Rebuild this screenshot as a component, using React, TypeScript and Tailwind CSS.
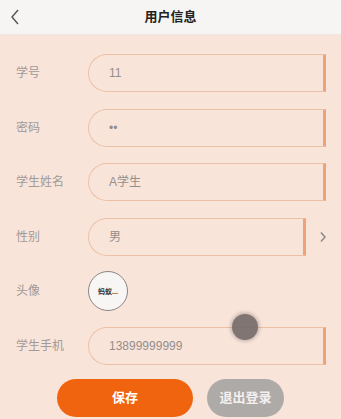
import { ReactNode } from 'react';

const font = { fontFamily: '"Liberation Sans", "Noto Sans CJK SC", sans-serif' };

interface FieldRowProps {
  label: string;
  children: ReactNode;
}

const FieldRow = ({ label, children }: FieldRowProps) => (
  <div className="flex items-center h-[38px]">
    <div className="w-[88px] pl-4 text-[12px] text-[#a09a98] shrink-0">{label}</div>
    {children}
  </div>
);

const InputBox = ({ value, width = 'w-[238px]' }: { value: string; width?: string }) => (
  <div
    className={`${width} h-[38px] flex items-center pl-5 rounded-l-full border border-[#ecc0a4] border-r-[3px] border-r-[#eea27a] text-[12px] text-[#948e8b]`}
  >
    {value}
  </div>
);

export default function App() {
  return (
    <div
      className="relative w-[341px] h-[419px] overflow-hidden bg-[#f9e4da]"
      style={font}
    >
      {/* header */}
      <div className="relative h-[35px] bg-[#f6f5f4] flex items-center justify-center border-b border-[#efe6e1]">
        <svg
          className="absolute left-[9px] top-[8px]"
          width="12"
          height="18"
          viewBox="0 0 12 18"
          fill="none"
          stroke="#555"
          strokeWidth="1.4"
        >
          <path d="M9 2 L3 9 L9 16" />
        </svg>
        <span className="text-[13px] font-bold text-[#222]">用户信息</span>
      </div>

      <div className="flex flex-col gap-[16.6px] pt-[19px]">
        <FieldRow label="学号">
          <InputBox value="11" />
        </FieldRow>
        <FieldRow label="密码">
          <InputBox value="••" />
        </FieldRow>
        <FieldRow label="学生姓名">
          <InputBox value="A学生" />
        </FieldRow>
        <FieldRow label="性别">
          <InputBox value="男" width="w-[218px]" />
          <svg
            className="ml-[13px]"
            width="8"
            height="12"
            viewBox="0 0 8 12"
            fill="none"
            stroke="#8a8a8a"
            strokeWidth="1.5"
          >
            <path d="M2 1.5 L6 6 L2 10.5" />
          </svg>
        </FieldRow>
        <FieldRow label="头像">
          <div className="w-[40px] h-[40px] rounded-full bg-[#f7f6f5] border-[1.5px] border-[#8c8582] flex items-center justify-center">
            <span className="text-[7px] font-bold text-[#333] leading-none">蚂蚁...</span>
          </div>
        </FieldRow>
        <FieldRow label="学生手机">
          <InputBox value="13899999999" />
        </FieldRow>
      </div>

      {/* buttons */}
      <div className="flex gap-[14px] pl-[57px] mt-[14px]">
        <button className="w-[136px] h-[38px] rounded-full bg-[#f0640f] text-white text-[13px] font-semibold">
          保存
        </button>
        <button className="w-[77px] h-[38px] rounded-full bg-[#aeaaa8] text-[#f4f0ee] text-[13px] font-semibold">
          退出登录
        </button>
      </div>

      {/* touch indicator */}
      <div className="absolute left-[232px] top-[314px] w-[26px] h-[26px] rounded-full bg-[#736a68] opacity-90 shadow-[0_0_3px_2px_rgba(115,106,104,0.35)]" />
    </div>
  );
}
